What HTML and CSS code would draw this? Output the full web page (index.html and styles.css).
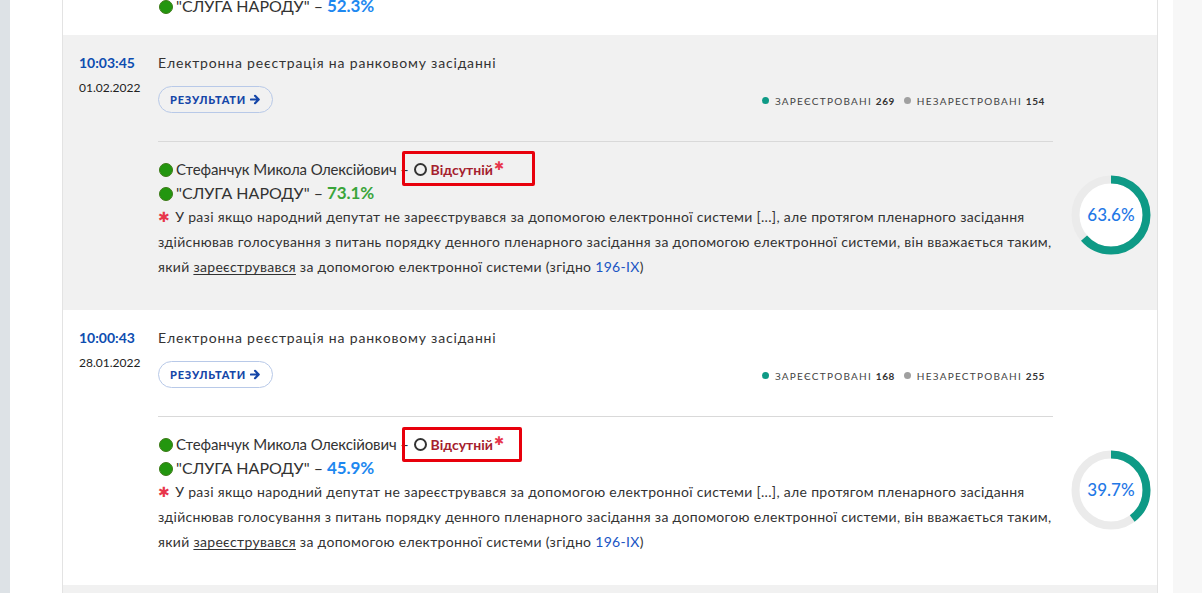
FILE: index.html
```html
<!DOCTYPE html>
<html lang="uk">
<head>
    <meta charset="UTF-8">
    <meta name="viewport" content="width=device-width, initial-scale=1">
    <title>Електронна реєстрація</title>
    <link rel="stylesheet" href="styles.css">
</head>
<body>
    <div class="layout">
        <div class="rail"></div>

        <main class="page">
            <div class="feed">

                <div class="tail">
                    <div class="party-line tail-line">
                        <span class="dot"></span>"СЛУГА НАРОДУ" – <b class="pct pct-blue">52.3%</b>
                    </div>
                </div>

                <!-- 01.02.2022 -->
                <section class="item item-grey">
                    <div class="when">
                        <div class="time">10:03:45</div>
                        <div class="date">01.02.2022</div>
                    </div>
                    <div class="head">
                        <div class="title">Електронна реєстрація на ранковому засіданні</div>
                        <div class="head-row">
                            <a class="btn" href="#">РЕЗУЛЬТАТИ
                                <svg class="arrow" viewBox="0 0 12 12" width="11" height="11"><path d="M1 6h8M5.5 2l4 4-4 4" fill="none" stroke="currentColor" stroke-width="2.4" stroke-linecap="round" stroke-linejoin="round"/></svg>
                            </a>
                            <div class="stats">
                                <span class="sdot sdot-green"></span>ЗАРЕЄСТРОВАНІ <b>269</b>
                                <span class="sdot sdot-grey"></span>НЕЗАРЕСТРОВАНІ <b>154</b>
                            </div>
                        </div>
                    </div>
                    <div class="rule"></div>
                    <div class="body">
                        <div class="deputy-line">
                            <span class="dot"></span>Стефанчук Микола Олексійович –
                            <span class="status status-wide"><span class="ring"></span><b>Відсутній</b><sup>✱</sup></span>
                        </div>
                        <div class="party-line">
                            <span class="dot"></span>"СЛУГА НАРОДУ" – <b class="pct pct-green">73.1%</b>
                        </div>
                        <p class="note">
                            <span class="star">✱</span> У разі якщо народний депутат не зареєструвався за допомогою електронної системи [...], але протягом пленарного засідання здійснював голосування з питань порядку денного пленарного засідання за допомогою електронної системи, він вважається таким, який <u>зареєструвався</u> за допомогою електронної системи (згідно <a href="#">196-IX</a>)
                        </p>
                    </div>
                    <div class="donut">
                        <svg viewBox="0 0 80 80" width="80" height="80">
                            <circle cx="40" cy="40" r="35.5" fill="#fff" stroke="#ebebeb" stroke-width="8"/>
                            <circle cx="40" cy="40" r="35.5" fill="none" stroke="#0e9a86" stroke-width="8" transform="rotate(-90 40 40)" style="stroke-dasharray: 141.9 223.1"/>
                        </svg>
                        <span class="donut-label">63.6%</span>
                    </div>
                </section>

                <!-- 28.01.2022 -->
                <section class="item">
                    <div class="when">
                        <div class="time">10:00:43</div>
                        <div class="date">28.01.2022</div>
                    </div>
                    <div class="head">
                        <div class="title">Електронна реєстрація на ранковому засіданні</div>
                        <div class="head-row">
                            <a class="btn" href="#">РЕЗУЛЬТАТИ
                                <svg class="arrow" viewBox="0 0 12 12" width="11" height="11"><path d="M1 6h8M5.5 2l4 4-4 4" fill="none" stroke="currentColor" stroke-width="2.4" stroke-linecap="round" stroke-linejoin="round"/></svg>
                            </a>
                            <div class="stats">
                                <span class="sdot sdot-green"></span>ЗАРЕЄСТРОВАНІ <b>168</b>
                                <span class="sdot sdot-grey"></span>НЕЗАРЕСТРОВАНІ <b>255</b>
                            </div>
                        </div>
                    </div>
                    <div class="rule"></div>
                    <div class="body">
                        <div class="deputy-line">
                            <span class="dot"></span>Стефанчук Микола Олексійович –
                            <span class="status"><span class="ring"></span><b>Відсутній</b><sup>✱</sup></span>
                        </div>
                        <div class="party-line">
                            <span class="dot"></span>"СЛУГА НАРОДУ" – <b class="pct pct-blue">45.9%</b>
                        </div>
                        <p class="note">
                            <span class="star">✱</span> У разі якщо народний депутат не зареєструвався за допомогою електронної системи [...], але протягом пленарного засідання здійснював голосування з питань порядку денного пленарного засідання за допомогою електронної системи, він вважається таким, який <u>зареєструвався</u> за допомогою електронної системи (згідно <a href="#">196-IX</a>)
                        </p>
                    </div>
                    <div class="donut">
                        <svg viewBox="0 0 80 80" width="80" height="80">
                            <circle cx="40" cy="40" r="35.5" fill="#fff" stroke="#ebebeb" stroke-width="8"/>
                            <circle cx="40" cy="40" r="35.5" fill="none" stroke="#0e9a86" stroke-width="8" transform="rotate(-90 40 40)" style="stroke-dasharray: 88.6 223.1"/>
                        </svg>
                        <span class="donut-label">39.7%</span>
                    </div>
                </section>

                <section class="item item-grey item-next"></section>
            </div>
        </main>

        <aside class="aside"></aside>
    </div>
</body>
</html>
```

FILE: styles.css
```css
html, body {
    margin: 0;
    padding: 0;
}

body {
    font-family: Lato, "Open Sans", sans-serif;
    color: #333;
    background: #fff;
    overflow: hidden;
}

.layout {
    display: flex;
    height: 593px;
}

.rail {
    width: 10px;
    background: #dde2e6;
}

.page {
    padding: 0 15px 0 52px;
    background: #fff;
}

.feed {
    width: 1094px;
    height: 100%;
    overflow: hidden;
    border-left: 1px solid #e3e3e3;
    border-right: 1px solid #e3e3e3;
}

.aside {
    flex: 1;
    background: #f7f7f7;
}

/* tail of the previous record */
.tail {
    height: 35px;
    padding-left: 95px;
    overflow: hidden;
}

.tail-line {
    margin-top: -6px;
}

/* record */
.item {
    display: grid;
    grid-template-columns: 79px 900px 80px;
    grid-template-areas:
        "when head ."
        ".    rule ."
        ".    body donut";
    padding: 18px 0 31px 16px;
}

.item-grey {
    background: #f1f1f1;
}

.item-next {
    height: 40px;
    padding: 0;
}

.when {
    grid-area: when;
}

.time {
    font-size: 14px;
    line-height: 20px;
    font-weight: 700;
    color: #0d4db0;
}

.date {
    margin-top: 7px;
    font-size: 12px;
    line-height: 16px;
    color: #222;
}

.head {
    grid-area: head;
    padding-right: 13px;
}

.title {
    font-size: 14px;
    line-height: 20px;
    letter-spacing: 0.82px;
    color: #333;
}

.head-row {
    display: flex;
    align-items: center;
    justify-content: space-between;
    margin-top: 13px;
}

.btn {
    display: inline-flex;
    align-items: center;
    gap: 4px;
    height: 25px;
    padding: 0 11px;
    border: 1px solid #b8c9e8;
    border-radius: 14px;
    font-size: 11px;
    font-weight: 900;
    letter-spacing: 0.8px;
    color: #1546a8;
    text-decoration: none;
}

.arrow {
    display: block;
}

.stats {
    margin-top: 3px;
    font-size: 10px;
    letter-spacing: 1.25px;
    color: #444;
}

.stats b {
    color: #333;
    letter-spacing: 0.6px;
}

.sdot {
    display: inline-block;
    width: 7px;
    height: 7px;
    border-radius: 50%;
    margin-right: 6px;
    vertical-align: 1px;
}

.sdot-green {
    background: #0e9a86;
}

.sdot-grey {
    background: #a0a0a0;
    margin-left: 5px;
}

.rule {
    grid-area: rule;
    height: 1px;
    margin: 28px 5px 0 0;
    background: #d9d9d9;
}

.body {
    grid-area: body;
    padding-top: 16px;
}

.deputy-line,
.party-line {
    height: 23px;
    line-height: 23px;
    font-size: 15px;
    letter-spacing: -0.12px;
    color: #333;
}

.party-line {
    font-size: 16px;
    letter-spacing: 0;
}

.dot {
    display: inline-block;
    width: 14px;
    height: 14px;
    border-radius: 50%;
    background: #23960f;
    border: 1px solid #3d7a18;
    box-sizing: border-box;
    margin: 0 3px 0 1px;
    vertical-align: -2px;
}

.pct {
    font-size: 17px;
    line-height: 1;
    font-weight: 700;
    letter-spacing: -0.1px;
}

.pct-blue {
    color: #1e88f0;
}

.pct-green {
    color: #3aa53a;
}

/* absent status with the red highlight frame */
.status {
    position: relative;
    margin-left: 1px;
    line-height: 1;
}

.status::before {
    content: "";
    position: absolute;
    left: -12px;
    right: -31px;
    top: -9px;
    bottom: -8px;
    border: 3px solid #e8000c;
    border-radius: 2px;
}

.status:not(.status-wide)::before {
    right: -18px;
    top: -8px;
    bottom: -9px;
}

.ring {
    display: inline-block;
    width: 13px;
    height: 13px;
    border: 2px solid #333;
    border-radius: 50%;
    box-sizing: border-box;
    margin-right: 4px;
    vertical-align: -1px;
}

.status b {
    font-size: 14px;
    letter-spacing: 0;
    color: #a5202d;
}

.status sup {
    font-size: 12px;
    line-height: 0;
    vertical-align: 5px;
    color: #e8364c;
    margin-left: 1px;
}

.note {
    margin: 0;
    font-size: 14px;
    line-height: 25px;
    letter-spacing: 0.31px;
    color: #333;
}

.note u {
    text-underline-offset: 2px;
}

.note a {
    color: #1a55c4;
    text-decoration: none;
}

.star {
    color: #e8364c;
    font-size: 14px;
    margin-right: 1px;
}

.donut {
    grid-area: donut;
    position: relative;
    align-self: center;
    margin: 8px 0 0 13px;
    width: 80px;
    height: 80px;
}

.donut svg {
    display: block;
}

.donut-label {
    position: absolute;
    inset: 0;
    display: flex;
    align-items: center;
    justify-content: center;
    font-size: 17px;
    font-weight: 500;
    color: #1f78e6;
}
```
